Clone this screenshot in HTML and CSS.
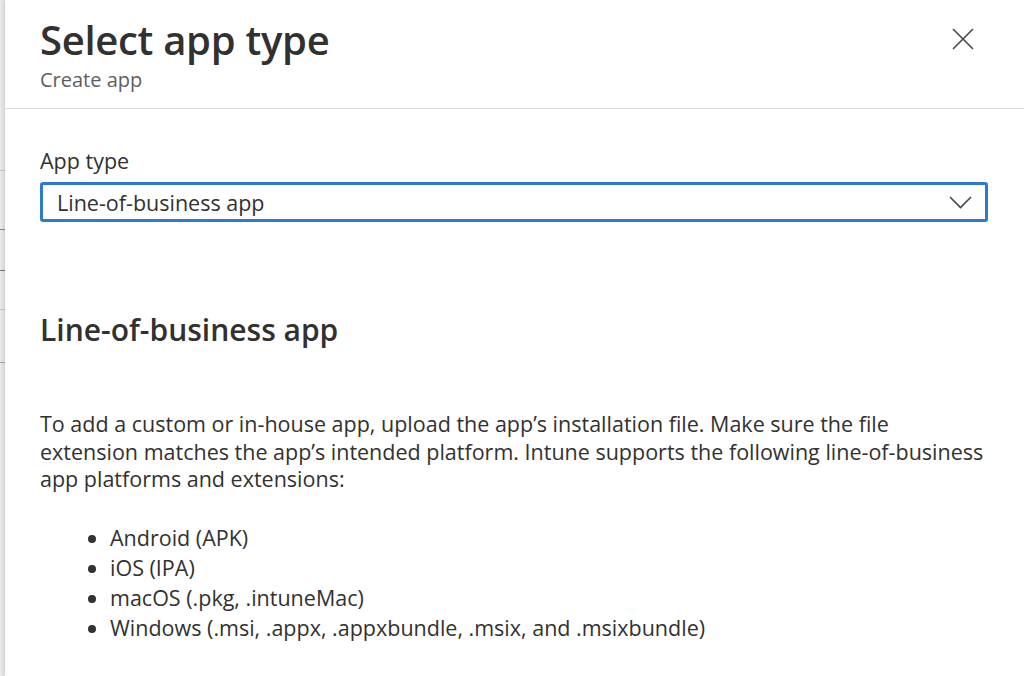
FILE: index.html
```html
<!DOCTYPE html>
<html lang="en">
<head>
    <meta charset="UTF-8">
    <meta name="viewport" content="width=device-width, initial-scale=1.0">
    <title>Select app type</title>
    <link rel="stylesheet" href="styles.css">
</head>
<body>
    <div class="backdrop">
        <span class="rule rule-1"></span>
        <span class="rule rule-2"></span>
        <span class="rule rule-3"></span>
        <span class="rule rule-4"></span>
        <span class="rule rule-5"></span>
    </div>

    <div class="panel">
        <div class="panel-header">
            <div class="titles">
                <h1>Select app type</h1>
                <div class="subtitle">Create app</div>
            </div>
            <button class="close" aria-label="Close">
                <svg width="22" height="22" viewBox="0 0 22 22">
                    <path d="M1 1L21 21M21 1L1 21" stroke="#484644" stroke-width="1.6" fill="none"/>
                </svg>
            </button>
        </div>

        <div class="panel-body">
            <label class="field-label">App type</label>
            <div class="dropdown">
                <span>Line-of-business app</span>
                <svg width="23" height="13" viewBox="0 0 23 13">
                    <path d="M1 1L11.5 11.5L22 1" stroke="#484644" stroke-width="1.6" fill="none"/>
                </svg>
            </div>

            <h2>Line-of-business app</h2>
            <p>To add a custom or in-house app, upload the app’s installation file. Make sure the file extension matches the app’s intended platform. Intune supports the following line-of-business app platforms and extensions:</p>
            <ul>
                <li>Android (APK)</li>
                <li>iOS (IPA)</li>
                <li>macOS (.pkg, .intuneMac)</li>
                <li>Windows (.msi, .appx, .appxbundle, .msix, and .msixbundle)</li>
            </ul>
        </div>
    </div>
</body>
</html>
```

FILE: styles.css
```css
body {
    font-family: "Open Sans", "Noto Sans", sans-serif;
    margin: 0;
    padding: 0;
    display: flex;
    height: 676px;
    overflow: hidden;
    background-color: #ececec;
    color: #323130;
}

/* Strip of the page behind the blade */
.backdrop {
    width: 5px;
    flex-shrink: 0;
    display: flex;
    flex-direction: column;
}
.rule {
    display: block;
    height: 1px;
    background-color: #c8c8c8;
}
.rule-1 { margin-top: 170px; }
.rule-2 { margin-top: 58px; background-color: #8a8a8a; }
.rule-3 { margin-top: 40px; background-color: #7a7a7a; }
.rule-4 { margin-top: 38px; }
.rule-5 { margin-top: 52px; background-color: #a8a8a8; }

.panel {
    flex: 1;
    background-color: white;
    box-shadow: -2px 0 4px rgba(0, 0, 0, 0.12);
}

.panel-header {
    box-sizing: border-box;
    display: flex;
    justify-content: space-between;
    align-items: flex-start;
    padding: 14px 50px 0 35px;
    height: 109px;
    border-bottom: 1px solid #d8d8d8;
}
h1 {
    margin: 0;
    font-size: 40px;
    font-weight: 600;
    line-height: 52px;
    letter-spacing: -0.3px;
}
.subtitle {
    font-size: 20px;
    color: #605e5c;
    line-height: 26px;
    margin-top: 1px;
}
.close {
    background: none;
    border: none;
    padding: 0;
    margin-top: 14px;
    cursor: pointer;
}

.panel-body {
    padding: 38px 35px 0 35px;
    font-size: 21.5px;
}
.field-label {
    display: block;
    line-height: 28px;
}
.dropdown {
    box-sizing: border-box;
    display: flex;
    justify-content: space-between;
    align-items: center;
    margin-top: 7px;
    height: 40px;
    padding: 0 13px 0 14px;
    border: 3px solid #2f79d6;
    border-radius: 3px;
    width: 948px;
}

h2 {
    margin: 88px 0 0 0;
    font-size: 30px;
    font-weight: 600;
    line-height: 40px;
}
p {
    margin: 60px 0 0 0;
    line-height: 27.5px;
    max-width: 948px;
}
ul {
    margin: 30px 0 0 0;
    padding-left: 70px;
    line-height: 30px;
}
```
